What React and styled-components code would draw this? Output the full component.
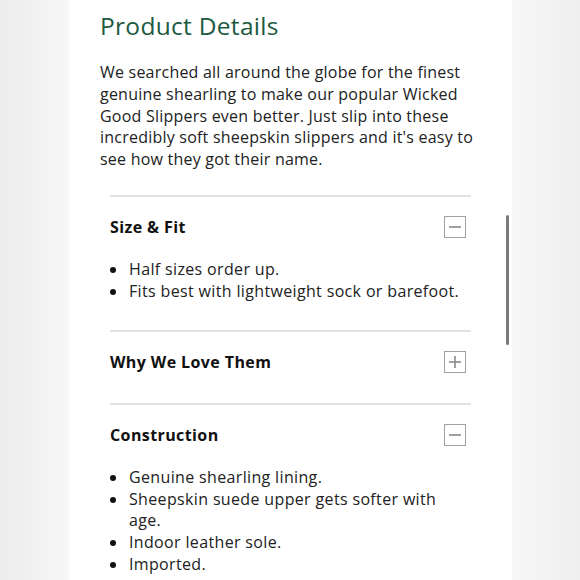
import React from 'react';
import styled, { createGlobalStyle } from 'styled-components';

const Global = createGlobalStyle`
  html, body {
    margin: 0;
    padding: 0;
    height: 580px;
    overflow: hidden;
  }
  body {
    background: linear-gradient(90deg, #ececec 0%, #f7f7f7 12%, #f7f7f7 88%, #efefef 100%);
    font-family: "Open Sans", "Liberation Sans", sans-serif;
    color: #222;
  }
`;

const Page = styled.div`
  display: flex;
  height: 580px;
`;

const Panel = styled.div`
  margin-left: 69px;
  width: 443px;
  height: 580px;
  background: #fff;
  box-sizing: border-box;
  padding: 11px 0 0 31px;
  position: relative;
`;

const Title = styled.h1`
  margin: 0;
  font-size: 24.5px;
  font-weight: 500;
  line-height: 29px;
  color: #1c5a42;
  letter-spacing: 0.3px;
`;

const Intro = styled.p`
  margin: 22px 0 0;
  font-size: 16px;
  line-height: 21.8px;
  color: #222;
  letter-spacing: 0.22px;
`;

const Accordion = styled.div`
  margin: 24px 0 0 10px;
  width: 361px;
`;

const Item = styled.section`
  border-top: 2px solid #e2e2e2;
  padding: 19px 0 ${(p) => (p.$open ? '28px' : '30px')};
`;

const Header = styled.div`
  display: flex;
  align-items: center;
  justify-content: space-between;
  height: 22px;
`;

const Label = styled.h2`
  margin: 0;
  font-size: 16px;
  font-weight: 700;
  color: #111;
  letter-spacing: 0.4px;
`;

const Toggle = styled.span`
  width: 20px;
  height: 20px;
  border: 1px solid #a0a0a0;
  margin-right: 5px;
  display: flex;
  align-items: center;
  justify-content: center;
`;

const List = styled.ul`
  margin: 21px 0 0;
  padding: 0;
  list-style: none;
`;

const Bullet = styled.li`
  position: relative;
  padding-left: 19px;
  font-size: 16px;
  line-height: 21.6px;
  color: #222;
  letter-spacing: 0.35px;
  &::before {
    content: '';
    position: absolute;
    left: 0;
    top: 8px;
    width: 6px;
    height: 6px;
    border-radius: 50%;
    background: #111;
  }
`;

const Scrollbar = styled.div`
  position: absolute;
  left: 437px;
  top: 215px;
  width: 3px;
  height: 130px;
  border-radius: 2px;
  background: #7a7a7a;
`;

const Icon = ({ open }) => (
  <svg width="14" height="14" viewBox="0 0 14 14">
    <line x1="1" y1="7" x2="13" y2="7" stroke="#8a8a8a" strokeWidth="1.6" />
    {!open && <line x1="7" y1="1" x2="7" y2="13" stroke="#8a8a8a" strokeWidth="1.6" />}
  </svg>
);

const sections = [
  { label: 'Size & Fit', open: true, items: [['Half sizes order up.'], ['Fits best with lightweight sock or barefoot.']] },
  { label: 'Why We Love Them', open: false, items: [] },
  {
    label: 'Construction',
    open: true,
    items: [
      ['Genuine shearling lining.'],
      ['Sheepskin suede upper gets softer with', 'age.'],
      ['Indoor leather sole.'],
      ['Imported.'],
    ],
  },
];

export default function App() {
  return (
    <Page>
      <Global />
      <Panel>
        <Title>Product Details</Title>
        <Intro>
          We searched all around the globe for the finest<br />
          genuine shearling to make our popular Wicked<br />
          Good Slippers even better. Just slip into these<br />
          incredibly soft sheepskin slippers and it's easy to<br />
          see how they got their name.
        </Intro>
        <Accordion>
          {sections.map((s) => (
            <Item key={s.label} $open={s.open}>
              <Header>
                <Label>{s.label}</Label>
                <Toggle>
                  <Icon open={s.open} />
                </Toggle>
              </Header>
              {s.open && (
                <List>
                  {s.items.map((lines) => (
                    <Bullet key={lines[0]}>
                      {lines.map((l, i) => (
                        <React.Fragment key={l}>
                          {i > 0 && <br />}
                          {l}
                        </React.Fragment>
                      ))}
                    </Bullet>
                  ))}
                </List>
              )}
            </Item>
          ))}
        </Accordion>
        <Scrollbar />
      </Panel>
    </Page>
  );
}
